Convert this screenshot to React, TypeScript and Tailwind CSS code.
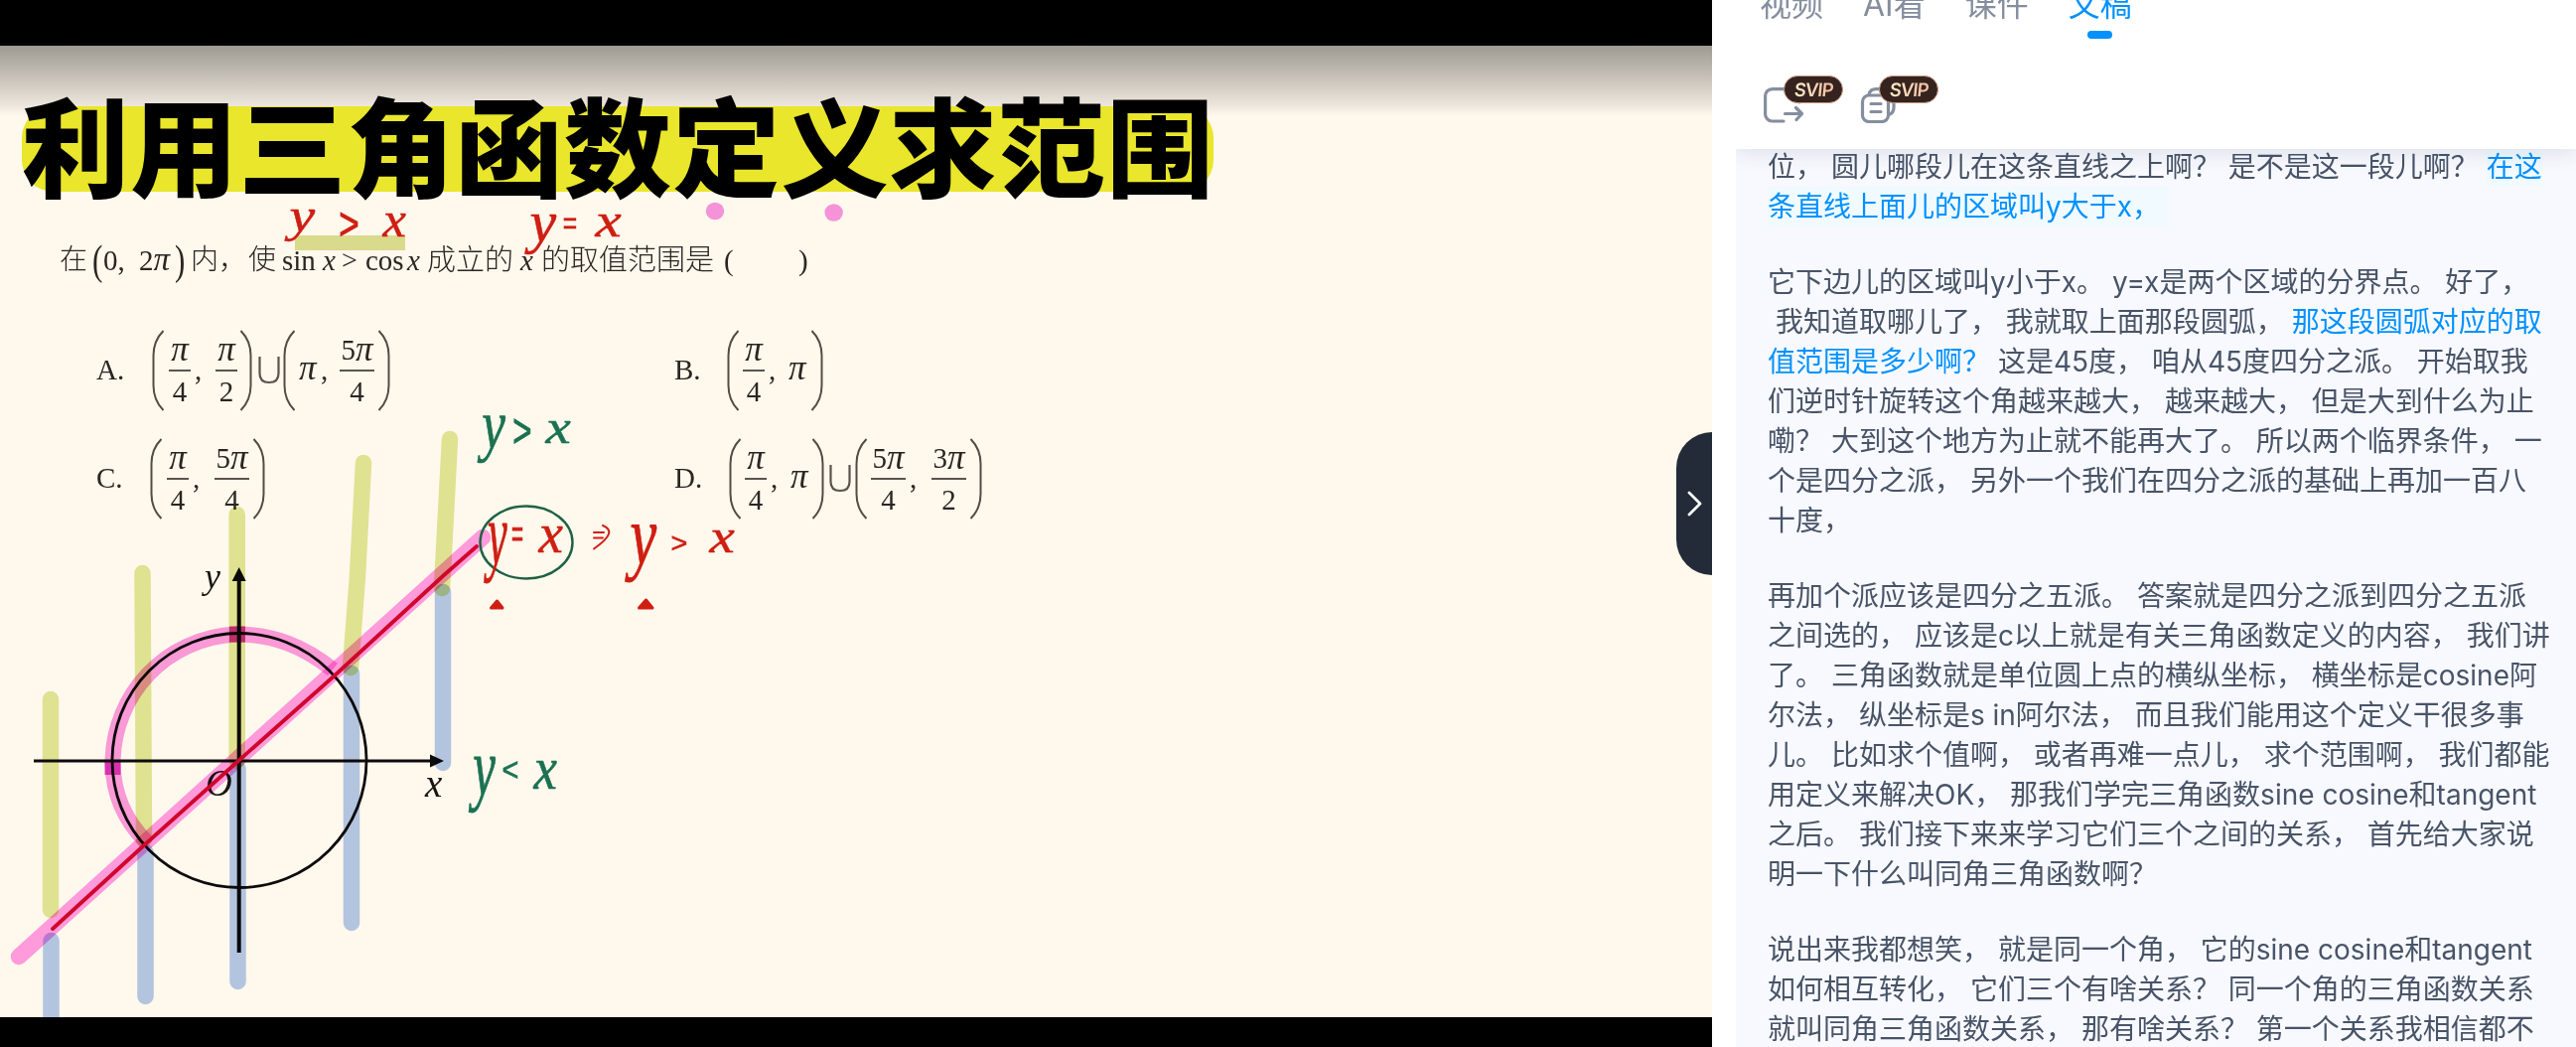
import React from "react";

type Seg = { t: string; hot?: boolean };
type Line = Seg[];

const paragraphs: Line[][] = [
  [
    [{ t: "位， 圆儿哪段儿在这条直线之上啊？ 是不是这一段儿啊？ " }, { t: "在这", hot: true }],
    [{ t: "条直线上面儿的区域叫y大于x， ", hot: true }],
  ],
  [
    [{ t: "它下边儿的区域叫y小于x。 y=x是两个区域的分界点。 好了，" }],
    [{ t: " 我知道取哪儿了， 我就取上面那段圆弧， " }, { t: "那这段圆弧对应的取", hot: true }],
    [{ t: "值范围是多少啊？", hot: true }, { t: " 这是45度， 咱从45度四分之派。 开始取我" }],
    [{ t: "们逆时针旋转这个角越来越大， 越来越大， 但是大到什么为止" }],
    [{ t: "嘞？ 大到这个地方为止就不能再大了。 所以两个临界条件， 一" }],
    [{ t: "个是四分之派， 另外一个我们在四分之派的基础上再加一百八" }],
    [{ t: "十度，" }],
  ],
  [
    [{ t: "再加个派应该是四分之五派。 答案就是四分之派到四分之五派" }],
    [{ t: "之间选的， 应该是c以上就是有关三角函数定义的内容， 我们讲" }],
    [{ t: "了。 三角函数就是单位圆上点的横纵坐标， 横坐标是cosine阿" }],
    [{ t: "尔法， 纵坐标是s in阿尔法， 而且我们能用这个定义干很多事" }],
    [{ t: "儿。 比如求个值啊， 或者再难一点儿， 求个范围啊， 我们都能" }],
    [{ t: "用定义来解决OK， 那我们学完三角函数sine cosine和tangent" }],
    [{ t: "之后。 我们接下来来学习它们三个之间的关系， 首先给大家说" }],
    [{ t: "明一下什么叫同角三角函数啊？" }],
  ],
  [
    [{ t: "说出来我都想笑， 就是同一个角， 它的sine cosine和tangent" }],
    [{ t: "如何相互转化， 它们三个有啥关系？ 同一个角的三角函数关系" }],
    [{ t: "就叫同角三角函数关系， 那有啥关系？ 第一个关系我相信都不" }],
  ],
];

/* Tall delimiter that spans a whole fraction. */
const Paren = ({ c }: { c: "(" | ")" }) => (
  <svg className={`shrink-0 ${c === ")" ? "-scale-x-100" : ""}`} width="12" height="82" viewBox="0 0 12 82" fill="none">
    <path d="M11.500 1C4.500 8 1.500 16 1.500 26V56C1.500 66 4.500 74 11.500 81" stroke="#544d46" strokeWidth="2" />
  </svg>
);

const Pi = () => <i className="inline-block text-[35px] leading-[34px]">π</i>;

const Frac = ({ n, d, w }: { n?: string; d: string; w: string }) => (
  <span className={`flex shrink-0 flex-col items-center ${w}`}>
    <span className="flex h-[40px] items-center whitespace-nowrap leading-[40px]">
      {n}
      <Pi />
    </span>
    <span className="h-[2px] w-full bg-[#5b544d]" />
    <span className="h-[40px] leading-[40px]">{d}</span>
  </span>
);

const Cup = ({ w }: { w: string }) => (
  <span className={`flex shrink-0 ${w}`}>
    <svg width="22" height="28" viewBox="0 0 22 28" fill="none">
      <path d="M1.500 0V17C1.500 23 5 26 11 26S20.500 23 20.500 17V0" stroke="#5b544d" strokeWidth="2.200" />
    </svg>
  </span>
);

/* Annotation glyph, stretched to fill a box. */
const boxes: Record<string, [number, number, number, number]> = {
  y: [-2.4, -44.1, 45, 64.7],
  x: [-2.7, -44.1, 47.4, 45.2],
  ">": [5, -56, 48.5, 46],
  "<": [5, -56, 48.5, 46],
  "=": [5, -45, 48.5, 26],
};
const Ink = ({ c, x, y, w, h, color }: { c: string; x: number; y: number; w: number; h: number; color: string }) => {
  const [bx, by, bw, bh] = boxes[c];
  const letter = c === "x" || c === "y";
  return (
    <text
      transform={`translate(${x} ${y}) scale(${w / bw} ${h / bh})`}
      x={-bx}
      y={-by}
      fontSize="100"
      fill={color}
      stroke={color}
      strokeWidth={letter ? 1 : 2}
      className={letter ? "font-['Liberation_Serif',serif] italic" : "font-['Liberation_Sans',sans-serif]"}
    >
      {c}
    </text>
  );
};

const RED = "#cf1e12";
const GREEN = "#1b7152";

const Annotations = () => (
  <svg className="pointer-events-none absolute inset-0" width="1724" height="978" viewBox="0 46 1724 978" fill="none">
    <g className="font-['Liberation_Serif',serif]" fill="#1a1512">
      <text x="206" y="592" fontSize="36" fontStyle="italic">y</text>
      <text x="428" y="802" fontSize="39" fontStyle="italic">x</text>
      <text x="207" y="801" fontSize="37" fontStyle="italic">O</text>
    </g>

    <circle cx="241" cy="765.5" r="128" stroke="#0d0b0b" strokeWidth="2.8" />
    <path d="M34 766H437" stroke="#0d0b0b" strokeWidth="3" />
    <path d="M447 766l-14-6.5v13z" fill="#0d0b0b" />
    <path d="M240.7 959V582" stroke="#0d0b0b" strokeWidth="4" />
    <path d="M240.7 571l-7 14h14z" fill="#0d0b0b" />

    <g className="mix-blend-multiply" stroke="#dfe99c" strokeWidth="16.5" strokeLinecap="round">
      <path d="M51 704V916" />
      <path d="M143.500 577L145 845" />
      <path d="M238.700 518V766" />
      <path d="M366 466L360 580L353 672" />
      <path d="M453 442L445 592" />
    </g>
    <g className="mix-blend-multiply" stroke="#b3caef" strokeWidth="16.5" strokeLinecap="round">
      <path d="M51.500 947V1040" />
      <path d="M146.500 858V1003" />
      <path d="M239.500 774V988" />
      <path d="M354 678V929" />
      <path d="M446 596V768" />
    </g>

    <path className="mix-blend-multiply" d="M19 963L486 541" stroke="#ff9fec" strokeWidth="16.500" strokeLinecap="round" />
    <g className="mix-blend-multiply" stroke="#f99de6" strokeWidth="16">
      <path d="M335 674C306 651 276 638.500 238 638.500C166 642 114 700 113.500 768C114 800 126 826 147 847" />
    </g>
    <path className="mix-blend-multiply" d="M231 638.500H247M113.500 767V780" stroke="#dd55d0" strokeWidth="16" />
    <path d="M53 935L145 851L240 766L337 680L447 579L480 550" stroke="#d0062c" strokeWidth="3.800" strokeLinecap="round" />
    <ellipse cx="530" cy="546" rx="46.500" ry="36.500" stroke="#1f6144" strokeWidth="2.400" />

    <rect className="mix-blend-multiply" x="297" y="237" width="111" height="15" fill="#dae197" />
    <ellipse cx="720" cy="212.500" rx="9.200" ry="8.800" fill="#f593d8" />
    <ellipse cx="839.600" cy="214" rx="9.200" ry="8.800" fill="#f593d8" />

    <Ink c="y" x={290} y={212} w={26} h={31} color={RED} />
    <Ink c=">" x={343} y={215} w={17} h={21} color={RED} />
    <Ink c="x" x={384} y={216} w={25} h={23} color={RED} />
    <Ink c="y" x={532} y={217} w={27} h={38} color={RED} />
    <Ink c="=" x={568} y={221} w={12} h={8} color={RED} />
    <Ink c="x" x={598} y={217} w={28} h={22} color={RED} />

    <Ink c="y" x={484} y={420} w={24} h={45} color={GREEN} />
    <Ink c=">" x={518} y={423} w={16} h={22} color={GREEN} />
    <Ink c="x" x={548} y={425} w={27} h={22} color={GREEN} />
    <Ink c="y" x={475} y={763} w={23} h={54} color={GREEN} />
    <Ink c="<" x={507} y={768} w={14} h={15} color={GREEN} />
    <Ink c="x" x={536} y={767} w={25} h={28} color={GREEN} />

    <Ink c="y" x={490} y={529} w={20} h={57} color={RED} />
    <Ink c="=" x={516} y={534} w={10} h={10} color={RED} />
    <Ink c="x" x={541} y={531} w={26} h={26} color={RED} />
    <path d="M598 536h10M598 541.500h9M607 529C617 533 616 540 598 552.500" stroke={RED} strokeWidth="2" strokeLinecap="round" />
    <Ink c="y" x={633} y={531} w={27} h={55} color={RED} />
    <Ink c=">" x={677} y={540} w={14} h={13} color={RED} />
    <Ink c="x" x={713} y={535} w={27} h={22} color={RED} />
    <path d="M500.500 605l5.500 7h-11.500z" fill={RED} stroke={RED} strokeWidth="3" strokeLinejoin="round" />
    <path d="M650.500 604l6.500 8h-13.500z" fill={RED} stroke={RED} strokeWidth="3" strokeLinejoin="round" />
  </svg>
);

const SvipBadge = () => (
  <span className="absolute left-[20px] top-[-12px] flex h-[28px] w-[60px] items-center justify-center rounded-full border border-[#c69a80] bg-[#35231f]">
    <span className="-skew-x-6 bg-gradient-to-r from-[#ffeccc] to-[#f5bfa0] bg-clip-text font-['Inter',sans-serif] text-[18.500px] font-semibold leading-[20px] tracking-[-1px] text-transparent">
      SVIP
    </span>
  </span>
);

const Whiteboard = () => (
  <section className="relative flex w-[1724px] shrink-0 flex-col bg-black pb-[30px] pt-[46px]">
    <div className="relative h-[978px] overflow-hidden bg-[#fff8ed] font-['Liberation_Serif','Noto_Sans_CJK_SC',serif] text-[29px] text-[#2b2622]">
      <div className="h-[61px] bg-gradient-to-b from-[#9e9a92] to-[#eee7dd]" />
      <div className="-mb-[10px] h-[10px] bg-gradient-to-b from-[#eee7dd] to-[#fff8ed]" />
      <h1 className="relative ml-[22px] h-[86px] w-[1200px] whitespace-nowrap rounded-[32px] bg-[#e9e62b] font-['Noto_Sans_CJK_SC',sans-serif] text-[108px] font-black leading-[86px] tracking-[1.200px] text-black">
        <span className="block -translate-y-[7px] leading-[86px]">利用三角函数定义求范围</span>
      </h1>

      <div className="mt-[47px] flex h-[44px] items-center whitespace-nowrap pl-[60px] font-['Liberation_Serif','Noto_Sans_CJK_SC',serif] leading-[44px]">
        <span className="w-[33px] text-[28px] font-light">在</span>
        <span className="w-[11px] origin-center scale-y-[1.35] text-[31px]">(</span>
        <span className="w-[36px]">0,</span>
        <span className="w-[36px]">2<i className="text-[33px] leading-[40px]">π</i></span>
        <span className="w-[16px] origin-center scale-y-[1.35] text-[31px]">)</span>
        <span className="w-[58px] text-[28px] font-light">内，</span>
        <span className="w-[34px] text-[28px] font-light">使</span>
        <span className="w-[41px]">sin</span>
        <span className="w-[19px] italic">x</span>
        <span className="w-[24px] text-[28px]">&gt;</span>
        <span className="w-[42px]">cos</span>
        <span className="w-[20px] italic">x</span>
        <span className="w-[94px] text-[29px] font-light">成立的</span>
        <span className="w-[21px] italic">x</span>
        <span className="w-[180px] text-[29px] font-light">的取值范围是</span>
        <span className="w-[79px] pl-1">(</span>
        <span>)</span>
      </div>

      <div className="mt-[48px] grid w-[1100px] grid-cols-[582px_1fr] gap-y-[27px] pl-[97px]">
        <div className="flex h-[82px] items-center">
          <span className="w-[56px]">A.</span>
          <Paren c="(" />
          <Frac d="4" w="ml-[5px] w-[22px]" />
          <span className="w-[25px] pl-[4px]">,</span>
          <Frac d="2" w="w-[22px]" />
          <span className="w-[3px]" />
          <Paren c=")" />
          <Cup w="ml-[6px] w-[25px]" />
          <Paren c="(" />
          <span className="w-[26px] pl-[4px]"><Pi /></span>
          <span className="w-[19px]">,</span>
          <Frac n="5" d="4" w="w-[35px]" />
          <span className="w-[4px]" />
          <Paren c=")" />
        </div>
        <div className="flex h-[82px] items-center">
          <span className="w-[53px]">B.</span>
          <Paren c="(" />
          <Frac d="4" w="ml-[4px] w-[22px]" />
          <span className="w-[24px] pl-[4px]">,</span>
          <span className="w-[23px]"><Pi /></span>
          <Paren c=")" />
        </div>
        <div className="flex h-[82px] items-center">
          <span className="w-[54px]">C.</span>
          <Paren c="(" />
          <Frac d="4" w="ml-[5px] w-[22px]" />
          <span className="w-[26px] pl-[4px]">,</span>
          <Frac n="5" d="4" w="w-[35px]" />
          <span className="w-[4px]" />
          <Paren c=")" />
        </div>
        <div className="flex h-[82px] items-center">
          <span className="w-[55px]">D.</span>
          <Paren c="(" />
          <Frac d="4" w="ml-[4px] w-[22px]" />
          <span className="w-[24px] pl-[4px]">,</span>
          <span className="w-[22px]"><Pi /></span>
          <Paren c=")" />
          <Cup w="ml-[5px] w-[26px]" />
          <Paren c="(" />
          <Frac n="5" d="4" w="ml-[4px] w-[35px]" />
          <span className="w-[26px] pl-[4px]">,</span>
          <Frac n="3" d="2" w="w-[35px]" />
          <span className="w-[4px]" />
          <Paren c=")" />
        </div>
      </div>
      <Annotations />
    </div>
    <button className="absolute right-0 top-[435px] flex h-[144px] w-[36px] items-center justify-center rounded-l-[36px] bg-[#232b38] pl-[2px]">
      <svg width="16" height="26" viewBox="0 0 16 26" fill="none">
        <path d="M2 2L13 13L2 24" stroke="#fff" strokeWidth="2.800" strokeLinecap="round" strokeLinejoin="round" />
      </svg>
    </button>
  </section>
);

const tabs = ["视频", "AI看", "课件", "文稿"];

export default function App() {
  return (
    <div className="flex h-[1054px] w-[2594px] overflow-hidden bg-white">
      <Whiteboard />
      <aside className="flex min-w-0 flex-1 flex-col pl-6 font-['Inter','Noto_Sans_CJK_SC',sans-serif]">
        <nav className="flex h-[70px] shrink-0 gap-[40px] pl-6">
          {tabs.map((t) => (
            <div
              key={t}
              className={`-mt-[19px] flex h-[59px] flex-col items-center whitespace-nowrap text-[32px] leading-[48px] ${
                t === "文稿" ? "text-[#0091ff]" : "text-[#858e9e]"
              }`}
            >
              {t}
              {t === "文稿" && <span className="mt-[2px] h-[8px] w-[25px] shrink-0 rounded-full bg-[#0091ff]" />}
            </div>
          ))}
        </nav>
        <div className="relative z-10 flex h-[80px] shrink-0 gap-[56px] bg-white pl-[28px] pt-[18px] shadow-[0_4px_20px_rgba(35,50,90,0.12)] [clip-path:inset(0_0_-40px_0)]">
          <div className="relative h-[36px] w-[40px]">
            <svg width="40" height="36" viewBox="0 0 40 36" fill="none" stroke="#858e9e" strokeWidth="3.200" strokeLinecap="round" strokeLinejoin="round">
              <path d="M36 15V8.600a7 7 0 0 0-7-7H8.600a7 7 0 0 0-7 7V27a7 7 0 0 0 7 7H20" />
              <path d="M21.500 26.500H38M32.500 20.500L38.500 26.500L33 32.500" />
            </svg>
            <SvipBadge />
          </div>
          <div className="relative h-[36px] w-[40px]">
            <svg width="40" height="36" viewBox="0 0 40 36" fill="none" stroke="#858e9e" strokeWidth="3.200" strokeLinecap="round" strokeLinejoin="round">
              <rect x="3.500" y="8" width="26" height="26.500" rx="6.500" />
              <path d="M10 7C11 3.500 13.500 1.700 17 1.700H27a8 8 0 0 1 8 8V20C35 24 33.500 26.500 30 27.500M12 16.500H22M12 24.500H22" />
            </svg>
            <SvipBadge />
          </div>
        </div>
        <div className="min-h-0 flex-1 overflow-hidden bg-[#f8f9fe] pl-8 text-[28px] leading-[40px] text-[#485468]">
          <div className="-mt-[2px] flex flex-col gap-[36px]">
            {paragraphs.map((p, i) => (
              <div key={i}>
                {p.map((line, j) => (
                  <div key={j} className="h-[40px] whitespace-pre">
                    {line.map((s, k) => (
                      <span key={k} className={s.hot ? (i === 0 ? "inline-block h-[40px] bg-[#f0faff] text-[#0091ff]" : "text-[#0091ff]") : ""}>
                        {s.t}
                      </span>
                    ))}
                  </div>
                ))}
              </div>
            ))}
          </div>
        </div>
      </aside>
    </div>
  );
}
